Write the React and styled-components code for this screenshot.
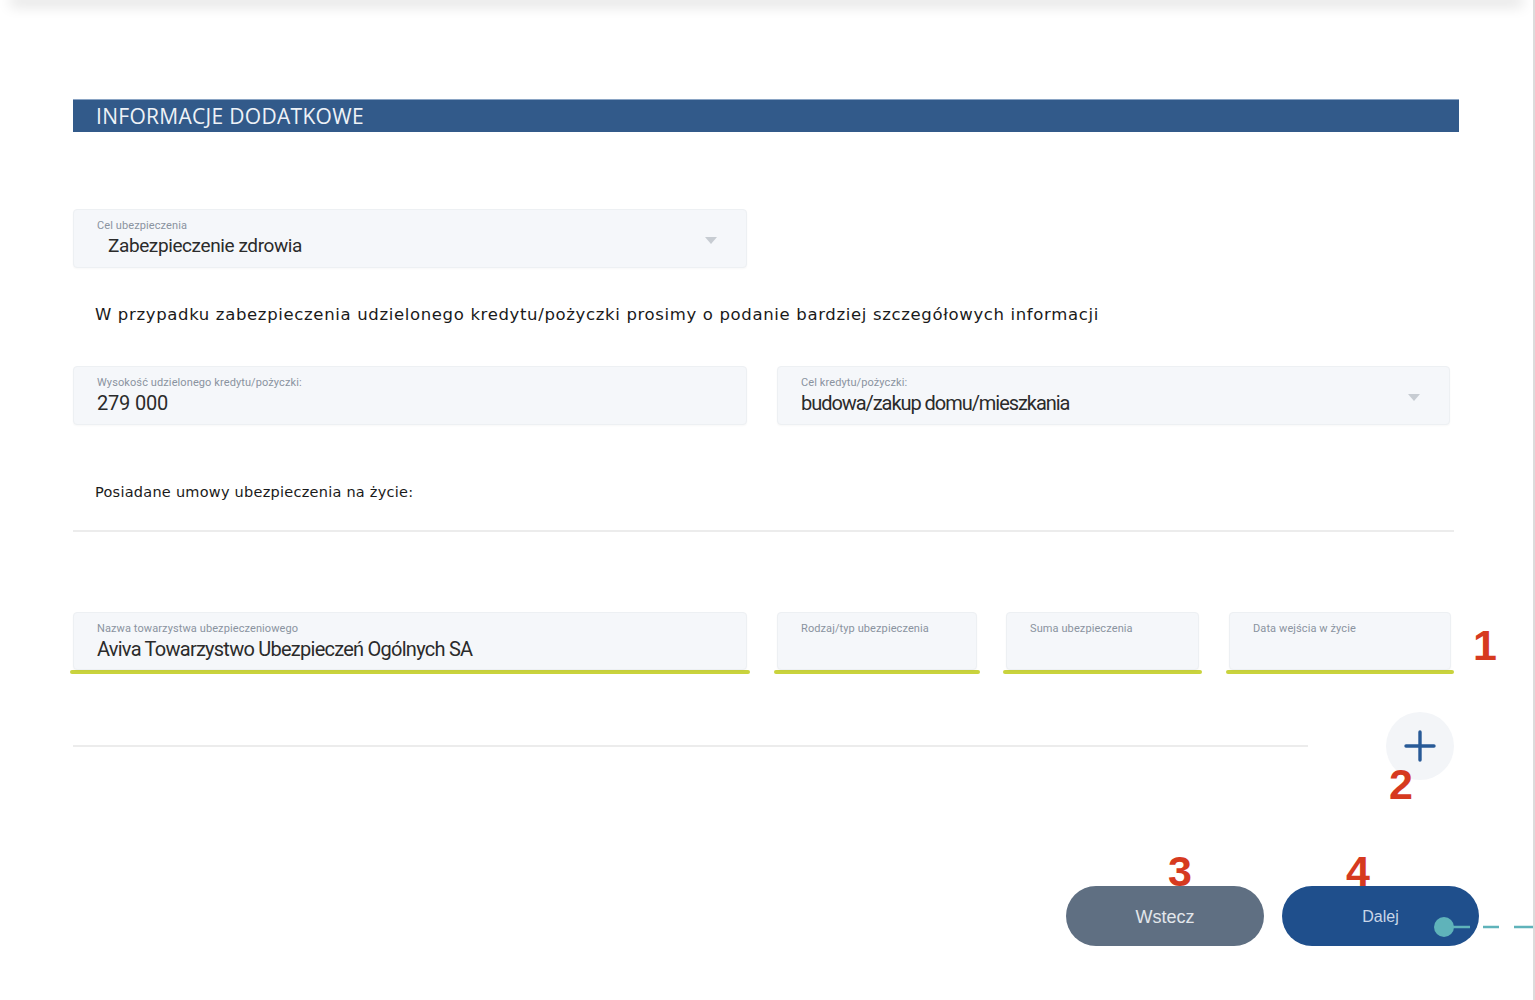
import React from "react";
import styled, { createGlobalStyle } from "styled-components";

const Global = createGlobalStyle`
  html, body { margin: 0; padding: 0; background: #fff; }
  body { font-family: "Open Sans", "Liberation Sans", sans-serif; }
  * { box-sizing: border-box; }
`;

const Page = styled.div`
  position: relative;
  width: 1535px;
  min-height: 1000px;
  border-right: 2px solid #dcdcdc;
  overflow: hidden;
`;

const TopShadow = styled.div`
  height: 2px;
  margin: -2px 14px 0;
  box-shadow: 0 2px 14px 4px rgba(0, 0, 0, 0.13);
`;

const Content = styled.div`
  padding-left: 73px;
  width: 1535px;
  display: flex;
  flex-direction: column;
`;

const HeaderBar = styled.div`
  margin-top: 99px;
  width: 1386px;
  height: 33px;
  background: #325a8a;
  border-top: 1px solid #8aa4c4;
  display: flex;
  align-items: center;
  padding-left: 23px;
  font-family: "Open Sans", sans-serif;
  font-size: 21px;
  letter-spacing: 0.3px;
  color: #eef2f7;
`;

const FieldBox = styled.div`
  position: relative;
  height: ${(p) => p.$h || 59}px;
  background: #f5f7fa;
  border: 1px solid #edf0f3;
  border-radius: 4px;
  box-shadow: 0 1px 2px rgba(0, 0, 0, 0.03);
  padding: 9px 23px 0;
  display: flex;
  flex-direction: column;
`;

const Label = styled.div`
  font-family: "Roboto", sans-serif;
  font-size: 11px;
  letter-spacing: 0.1px;
  color: #8a93a0;
  line-height: 14px;
`;

const Value = styled.div`
  font-family: "Roboto", sans-serif;
  font-size: ${(p) => p.$size || 20}px;
  letter-spacing: ${(p) => p.$ls ?? -0.7}px;
  color: #2b2b2b;
  line-height: 24px;
  margin-top: 1px;
  padding-left: ${(p) => p.$indent || 0}px;
`;

const Caret = styled.div`
  position: absolute;
  right: 29px;
  top: 27px;
  width: 0;
  height: 0;
  border-left: 6px solid transparent;
  border-right: 6px solid transparent;
  border-top: 7px solid #c7ccd2;
`;

const SelectOne = styled.div`
  margin-top: 77px;
  width: 674px;
`;

const Paragraph = styled.p`
  margin: 35px 0 0;
  padding-left: 22px;
  font-family: "DejaVu Sans", "Open Sans", sans-serif;
  font-size: 16.5px;
  letter-spacing: 0.65px;
  line-height: 24px;
  color: #1a1a1a;
`;

const TwoCols = styled.div`
  margin-top: 39px;
  display: grid;
  grid-template-columns: 674px 673px;
  column-gap: 30px;
`;

const SubHeading = styled.div`
  margin-top: 57px;
  padding-left: 22px;
  font-family: "DejaVu Sans", "Open Sans", sans-serif;
  font-size: 14.5px;
  letter-spacing: 0.25px;
  line-height: 20px;
  color: #1a1a1a;
`;

const Divider = styled.div`
  margin-top: ${(p) => p.$mt || 0}px;
  width: ${(p) => p.$w}px;
  height: 2px;
  background: #ececec;
`;

const PolicyRow = styled.div`
  position: relative;
  margin-top: 80px;
  display: grid;
  grid-template-columns: 674px 200px 192px 222px;
  column-gap: 30px;
  width: 1377px;
`;

const PolicyCell = styled.div`
  display: flex;
  flex-direction: column;
  &:nth-child(3) { margin-left: -1px; }
`;

const GreenLine = styled.div`
  height: 4px;
  margin: 0 -3px 0;
  background: #c9d33d;
  border-radius: 2px;
`;

const Marker = styled.div`
  position: absolute;
  left: ${(p) => p.$x}px;
  top: ${(p) => p.$y}px;
  transform: translate(-50%, -50%);
  font-family: "Liberation Sans", Arial, sans-serif;
  font-weight: 700;
  font-size: 43px;
  line-height: 1;
  color: #d63a1f;
  z-index: 3;
`;

const AddRow = styled.div`
  position: relative;
  margin-top: 38px;
  width: 1381px;
  height: 68px;
  display: flex;
  align-items: center;
  justify-content: space-between;
`;

const AddButton = styled.button`
  width: 68px;
  height: 68px;
  border-radius: 50%;
  border: none;
  background: #f3f5f8;
  display: flex;
  align-items: center;
  justify-content: center;
  padding: 0;
  cursor: pointer;
`;

const ButtonRow = styled.div`
  position: relative;
  margin-top: 106px;
  width: 1406px;
  display: flex;
  justify-content: flex-end;
  gap: 18px;
`;

const NavButton = styled.button`
  width: ${(p) => p.$w}px;
  height: 60px;
  border: none;
  border-radius: 30px;
  background: ${(p) => p.$bg};
  color: ${(p) => p.$fg};
  font-family: "Liberation Sans", Arial, sans-serif;
  font-size: ${(p) => p.$fs}px;
  padding: ${(p) => p.$pt || 0}px 0 0;
  cursor: pointer;
`;

const Connector = styled.svg`
  position: absolute;
  right: -56px;
  top: 30px;
  overflow: visible;
`;

export default function App() {
  return (
    <Page>
      <Global />
      <TopShadow />
      <Content>
        <HeaderBar>INFORMACJE DODATKOWE</HeaderBar>

        <SelectOne>
          <FieldBox>
            <Label>Cel ubezpieczenia</Label>
            <Value $size={19} $ls={-0.4} $indent={11}>Zabezpieczenie zdrowia</Value>
            <Caret />
          </FieldBox>
        </SelectOne>

        <Paragraph>
          W przypadku zabezpieczenia udzielonego kredytu/pożyczki prosimy o podanie bardziej szczegółowych informacji
        </Paragraph>

        <TwoCols>
          <FieldBox>
            <Label>Wysokość udzielonego kredytu/pożyczki:</Label>
            <Value $ls={-0.2}>279 000</Value>
          </FieldBox>
          <FieldBox>
            <Label>Cel kredytu/pożyczki:</Label>
            <Value $ls={-1.05}>budowa/zakup domu/mieszkania</Value>
            <Caret />
          </FieldBox>
        </TwoCols>

        <SubHeading>Posiadane umowy ubezpieczenia na życie:</SubHeading>
        <Divider $mt={28} $w={1381} />

        <PolicyRow>
          <PolicyCell>
            <FieldBox $h={58}>
              <Label>Nazwa towarzystwa ubezpieczeniowego</Label>
              <Value $ls={-0.75}>Aviva Towarzystwo Ubezpieczeń Ogólnych SA</Value>
            </FieldBox>
            <GreenLine />
          </PolicyCell>
          <PolicyCell>
            <FieldBox $h={58}>
              <Label>Rodzaj/typ ubezpieczenia</Label>
            </FieldBox>
            <GreenLine />
          </PolicyCell>
          <PolicyCell>
            <FieldBox $h={58}>
              <Label>Suma ubezpieczenia</Label>
            </FieldBox>
            <GreenLine />
          </PolicyCell>
          <PolicyCell>
            <FieldBox $h={58}>
              <Label>Data wejścia w życie</Label>
            </FieldBox>
            <GreenLine />
          </PolicyCell>
          <Marker $x={1412} $y={33}>1</Marker>
        </PolicyRow>

        <AddRow>
          <Divider $w={1235} />
          <AddButton aria-label="Dodaj">
            <svg width="32" height="32" viewBox="0 0 32 32">
              <path d="M16 2v28M2 16h28" stroke="#285a97" strokeWidth="3.4" strokeLinecap="round" />
            </svg>
          </AddButton>
          <Marker $x={1328} $y={72}>2</Marker>
        </AddRow>

        <ButtonRow>
          <NavButton $w={198} $bg="#5f6f82" $fg="#e2e6eb" $fs={18} $pt={3}>Wstecz</NavButton>
          <NavButton $w={197} $bg="#1f4f8c" $fg="#c9d6e8" $fs={16} $pt={1}>Dalej</NavButton>
          <Marker $x={1107} $y={-15}>3</Marker>
          <Marker $x={1285} $y={-15}>4</Marker>
          <Connector width="92" height="22" viewBox="0 0 92 22">
            <circle cx="1" cy="11" r="10" fill="#5fb3ba" />
            <line x1="8" y1="11" x2="27" y2="11" stroke="#5fb3ba" strokeWidth="2.5" />
            <line x1="40" y1="11" x2="56" y2="11" stroke="#5fb3ba" strokeWidth="2.5" />
            <line x1="71" y1="11" x2="92" y2="11" stroke="#5fb3ba" strokeWidth="2.5" />
          </Connector>
        </ButtonRow>
      </Content>
    </Page>
  );
}
